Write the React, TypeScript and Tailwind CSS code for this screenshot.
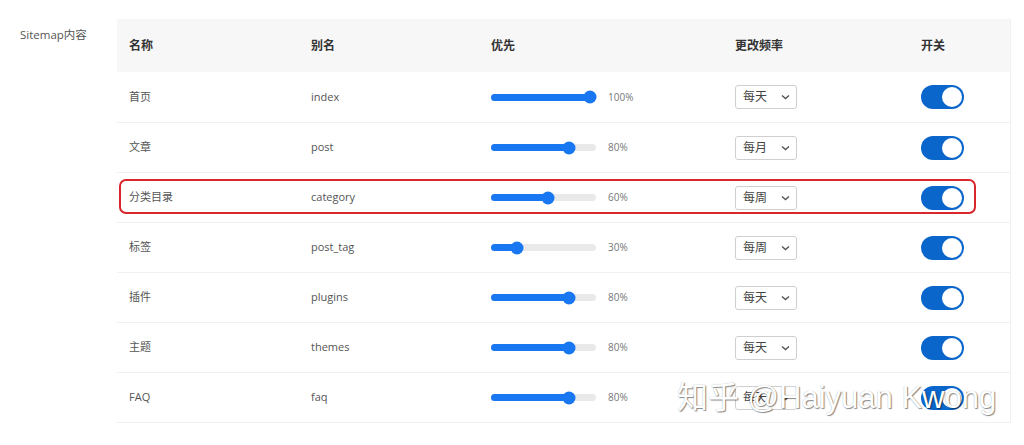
import React from "react";

const rows = [
  { name: "首页", alias: "index", pct: 100, freq: "每天" },
  { name: "文章", alias: "post", pct: 80, freq: "每月" },
  { name: "分类目录", alias: "category", pct: 60, freq: "每周" },
  { name: "标签", alias: "post_tag", pct: 30, freq: "每周" },
  { name: "插件", alias: "plugins", pct: 80, freq: "每天" },
  { name: "主题", alias: "themes", pct: 80, freq: "每天" },
  { name: "FAQ", alias: "faq", pct: 80, freq: "每天" },
];

const cols = "grid grid-cols-[182px_180px_244px_186px_1fr] items-center";

function Slider({ pct }: { pct: number }) {
  const pos = pct * 1.05 - 6;
  return (
    <div className="flex items-center">
      <div className="relative h-[7px] w-[105px] rounded-full bg-[#e9e9e9]">
        <div className="h-full rounded-full bg-[#1a77f2]" style={{ width: `${pos}px` }} />
        <div
          className="absolute top-1/2 h-[13px] w-[13px] -translate-x-1/2 -translate-y-1/2 rounded-full bg-[#1a77f2]"
          style={{ left: `${pos}px` }}
        />
      </div>
      <span className="ml-3 text-[10px] text-[#777]">{pct}%</span>
    </div>
  );
}

function Select({ value }: { value: string }) {
  return (
    <div className="flex h-[24px] w-[62px] items-center justify-between rounded-[3px] border border-[#cfcfcf] bg-white pl-[7px] pr-[5px]">
      <span className="text-[12px] text-[#444]">{value}</span>
      <svg width="11" height="10" viewBox="0 0 11 10" fill="none">
        <path d="M2 3.5 L5.5 6.5 L9 3.5" stroke="#555" strokeWidth="1.4" />
      </svg>
    </div>
  );
}

function Toggle() {
  return (
    <div className="flex h-[24px] w-[43px] items-center justify-end rounded-full bg-[#0b66cc] pr-[2px]">
      <div className="h-[20px] w-[20px] rounded-full bg-white" />
    </div>
  );
}

export default function App() {
  return (
    <div
      className="flex h-[445px] w-[1024px] bg-white pt-[19px]"
      style={{ fontFamily: '"Open Sans", "Noto Sans CJK SC", sans-serif' }}
    >
      <div className="w-[117px] pl-[20px] pt-[7px] text-[11.5px] text-[#555]">Sitemap内容</div>

      <div className="relative h-[404px] w-[894px] border-b border-r border-[#f0f0f0]">
        <div className={`${cols} h-[53px] bg-[#f7f7f7] text-[12px] font-bold text-[#333]`}>
          <div className="pl-[12px]">名称</div>
          <div className="pl-[12px]">别名</div>
          <div className="pl-[12px]">优先</div>
          <div className="pl-[12px]">更改频率</div>
          <div className="pl-[12px]">开关</div>
        </div>
        {rows.map((r, i) => (
          <div
            key={r.alias}
            className={`${cols} h-[50px] text-[11px] text-[#555] ${i > 0 ? "border-t border-[#f0f0f0]" : ""}`}
          >
            <div className="pl-[12px]">{r.name}</div>
            <div className="pl-[12px]">{r.alias}</div>
            <div className="pl-[12px]">
              <Slider pct={r.pct} />
            </div>
            <div className="pl-[12px]">
              <Select value={r.freq} />
            </div>
            <div className="pl-[12px]">
              <Toggle />
            </div>
          </div>
        ))}

        {/* highlight annotation */}
        <div className="pointer-events-none absolute left-[2px] top-[160px] h-[35px] w-[857px] rounded-[7px] border-2 border-[#d9262c]" />
      </div>

      {/* watermark */}
      <div
        className="pointer-events-none absolute left-[677px] top-[375px] text-[31px] text-white"
        style={{
          fontFamily: '"Liberation Sans", "Noto Sans CJK SC", sans-serif',
          textShadow: "1px 1px 1px rgba(0,0,0,0.45), 0 0 1px rgba(0,0,0,0.3)",
        }}
      >
        知乎 @Haiyuan Kwong
      </div>
    </div>
  );
}
